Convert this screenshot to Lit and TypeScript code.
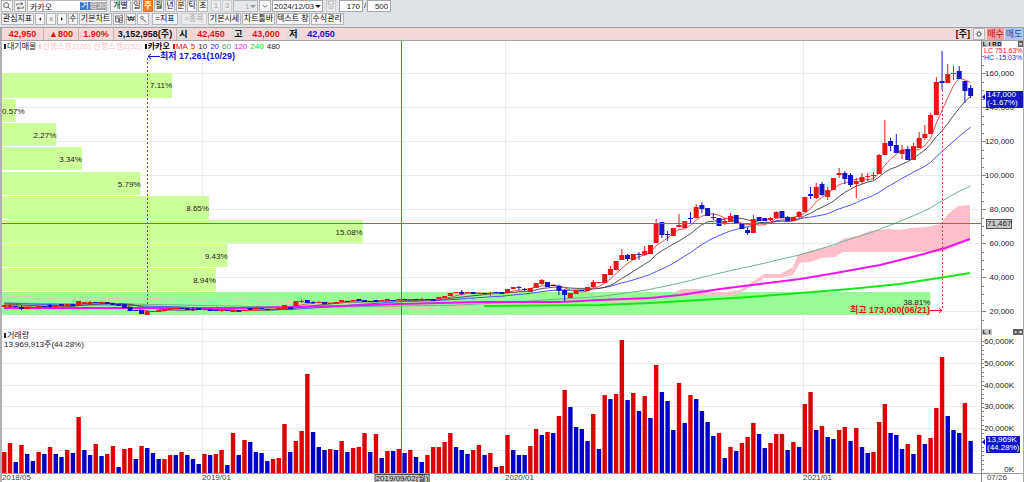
import { LitElement, html, svg, css } from "lit";
import { customElement } from "lit/decorators.js";
import { classMap } from "lit/directives/class-map.js";

const STEP = 5.718;
const FIRST = 4.3;
const X0 = 2;
const W = 979;
const PRICE_TOP = 41;
const PRICE_H = 288;
const VOL_TOP = 329;
const VOL_H = 144;
const cx = (i: number) => FIRST + i * STEP;
const pctX = (x: number) => ((x - X0) / W) * 100;
const pctP = (y: number) => ((y - PRICE_TOP) / PRICE_H) * 100;
const pctV = (y: number) => ((y - VOL_TOP) / VOL_H) * 100;

// Weekly candles: direction, body top, body bottom, optional high and low.
const CANDLES = `
R305,307 R305,307,304,308 B306,307 B307,309,305,310 R307,309 R307,308 R306,308 B306,307 B305,307,304,308 R305,307
B304,306 R304,306 B304,306 R301,306 R302,304 R302,304,301,305 B302,303 R302,304 B302,304 B303,305 B304,306 B304,308
B307,311 B310,311 B310,314 R311,315 R311,312 R310,312 R309,311 R308,310 R308,309 B308,309 B308,310 B309,310,307,311
B308,310 R309,310 B309,311 B310,311 R310,311,309,312 B310,311 R310,312 B310,312 R310,311 B308,310 R308,309 B308,309
B309,310 R309,310 R308,310 R305,309 B307,309 R301,306 R301,302,299,303 B300,303 B302,303,301,304 R302,303 B302,304
R303,304 R302,304 R300,302 B301,302 R300,301 B299,301 B300,302 B301,302 B300,302 R300,301 R299,301 B300,301 R299,300
B299,300 R299,300 B299,300 R299,300,298,301 B299,300 B299,301 R297,299 R296,298 R293,296 R292,293 B292,294,290,295
R292,293 B292,294 R293,294 B293,294 R293,294,292,296 B292,293 B292,294 R289,293 R287,289 B287,288,286,290 B289,290,288,291
R288,292 R283,288 R280,284,279,285 B282,287 B285,286 B286,291,285,295 B290,295,289,301 R293,298 R290,294 B290,291
R287,291 R282,287,280,288 R282,283 R274,283 R269,275,266,275 R261,270 R255,260,249,260 B255,259,254,261 R254,260
B254,255,252,260 R251,255,246,256 R245,254 R224,243,219,243 B222,235,222,238 B234,235,231,241 R228,236 R225,227,214,227
R221,228 B218,219,212,223 R207,218,204,218 B205,209,202,213 B208,216 B217,218,213,220 B218,226 R221,224,218,225
R216,222,213,222 B215,224 B223,229 B230,233,227,235 R219,233,215,233 B217,221 B218,221 R218,220,217,221 R212,218,211,218
B211,218 B217,221,216,221 R217,221 R212,217,211,218 R197,212 B194,196,187,199 R187,198,183,199 B184,195,182,196
R190,197,187,200 R178,190 R173,175,168,178 B173,179,171,184 B175,185,173,187 R181,184,178,198 R177,182,173,184
R176,177,173,181 R175,176,172,180 R155,174,154,174 R143,155,120,155 B141,146,138,151 B145,153,134,153 R150,154,145,159
B149,160,146,160 R146,160,143,160 R138,148,132,148 R134,138,125,140 R115,134,113,134 R82,115,77,115 B81,83,51,90
R74,83,64,83 R73,74,66,80 B71,79,66,79 B81,91,81,103 B88,96,85,98`
  .trim()
  .split(/\s+/)
  .map((s) => {
    const n = s.slice(1).split(",").map(Number);
    return { up: s[0] === "R", top: n[0], bottom: n[1], high: n[2] ?? n[0], low: n[3] ?? n[1] };
  });

const VOLUMES = `
R452 R443 B462 R445 B454 B461 R452 B454 R447 B454 B457 R450 B453 R417 B450 B455 R444 B456 R454 R446
B467 R449 R448 B459 R446 B448 B453 B459 R459 R455 B455 R452 B455 B459 B464 R454 B455 R454 R450 B465
R433 B455 R440 B442 B452 B453 B461 R459 R458 R424 B452 R441 R431 R374 B432 B447 B450 R449 B450 R441
B452 R448 R447 R433 B452 R434 B458 R451 B451 R449 B453 R450 B457 B462 R455 R447 R447 R442 R433 B447
B450 B454 R450 R445 B455 R453 B467 R466 R435 B450 B455 B455 R446 R429 B435 R432 B433 R416 R390 B407
B427 B429 B441 R414 B449 R395 B399 R394 R340 B400 R393 B411 R396 B418 R365 B392 B401 B430 R383 B423
R395 B399 B411 B422 B436 R433 B458 R447 B451 R443 R437 R423 B434 B448 R443 R434 R434 B450 R442 B447
R404 R392 B430 R426 B437 B439 R430 R427 B441 R428 B447 B453 R452 R422 R404 B433 B435 B449 R444 B454
R435 B444 R438 R408 R357 B416 B430 B433 R403 B441`
  .trim()
  .split(/\s+/)
  .map((s) => ({ up: s[0] === "R", top: Number(s.slice(1)) }));

const PROFILE = [
  { pct: 7.11, y: 73 },
  { pct: 0.57, y: 99 },
  { pct: 2.27, y: 123 },
  { pct: 3.34, y: 147 },
  { pct: 5.79, y: 172 },
  { pct: 8.65, y: 196 },
  { pct: 15.08, y: 220 },
  { pct: 9.43, y: 244 },
  { pct: 8.94, y: 268 },
  { pct: 38.81, y: 292 },
];
const PX_PER_PCT = 23.92;

const CLOSES = CANDLES.map((c) => (c.up ? c.top : c.bottom));
function average(period: number, pad: number): string {
  return CLOSES.map((_, i) => {
    let sum = 0;
    for (let k = i - period + 1; k <= i; k++) sum += k < 0 ? pad : CLOSES[k];
    return `${cx(i).toFixed(1)},${(sum / period).toFixed(1)}`;
  }).join(" ");
}

const PRICE_TICKS = [160, 140, 120, 100, 80, 60, 40, 20].map((v, i) => ({ text: `${v},000`, y: 73 + i * 34 }));
const VOL_TICKS = [
  { text: "60,000K", y: 341 },
  { text: "50,000K", y: 363 },
  { text: "40,000K", y: 385 },
  { text: "30,000K", y: 406 },
  { text: "20,000K", y: 428 },
  { text: "", y: 450 },
  { text: "0K", y: 469 },
];
const YEARS = [
  { text: "2019/01", x: 202 },
  { text: "2020/01", x: 505 },
  { text: "2021/01", x: 803 },
];

const icon = {
  search: svg`<circle cx="5" cy="5" r="3" /><path d="M7.2 7.2 10.5 10.5" />`,
  refresh: svg`<path d="M2 5.5V3.5H9M7 1.5 9.5 3.5 7 5M10 6.5V8.5H3M5 6.8 2.5 8.5 5 10.5" />`,
  left: svg`<path class="solid" d="M7.5 3.5V8.5L4.5 6Z" />`,
  bars: svg`<path d="M4 4.5H8.5M4 7.5H8.5" />`,
  right: svg`<path class="solid" d="M4.5 3.5V8.5L7.5 6Z" />`,
  book: svg`<path d="M1.5 2.5H7M1.5 5H5.5M2 2.5V9.5H5.5V5M7.5 1.5H10V10.5H6.5V4.5H10M6.5 7.5H10" />`,
  tool: svg`<path d="M2.5 4.5 4.5 2.5 6.5 4 5 6.5ZM5.8 5.8 10 10" />`,
  gear: svg`<circle cx="6" cy="6" r="2.3" /><path d="M6 2V3.5M6 8.5V10M2 6H3.500M8.5 6H10M3.2 3.2 4.2 4.2M7.8 7.8 8.8 8.8M3.2 8.8 4.2 7.8M7.8 4.2 8.8 3.2" />`,
  down: svg`<path d="M3.5 5 6 7.5 8.5 5" />`,
};
const ico = (k: keyof typeof icon) =>
  html`<svg class="icon" viewBox="0 0 12 12" aria-hidden="true">${icon[k]}</svg>`;

@customElement("app-root")
export class AppRoot extends LitElement {
  static styles = css`
    :host {
      display: grid;
      grid-template-rows: 27px 14px minmax(0, 1fr);
      height: 100vh;
      overflow: hidden;
      background: #fff;
      color: #222;
      font: 8px/9px "Liberation Sans", "Noto Sans CJK KR", sans-serif;
      white-space: nowrap;
    }
    * { box-sizing: border-box; }
    button, input, select { font: inherit; color: inherit; margin: 0; padding: 0; border-radius: 0; }
    .toolbar {
      display: grid;
      grid-template-rows: 12px 12px;
      row-gap: 1px;
      background: #dfe3e8;
    }
    .bar { display: flex; gap: 1px; padding-left: 1px; align-items: stretch; }
    .tool {
      min-width: 10px;
      border: 1px solid #b4b6ba;
      background: #f4f4f4;
      color: #111;
      display: flex;
      align-items: center;
      justify-content: center;
      line-height: 10px;
    }
    .tool.on { background: #f58220; border-color: #e07010; color: #fff; font-weight: bold; }
    .tool:disabled { color: #a8a8a8; background: #ebebeb; border-color: #cfcfcf; }
    .wide { min-width: 33px; }
    .mid { min-width: 26px; }
    .pair { min-width: 21px; }
    .gap { margin-left: 2px; }
    .icon { width: 10px; height: 10px; fill: none; stroke: #555; stroke-width: 1; flex: none; }
    .mini .icon { width: 8px; }
    .icon .solid { fill: #222; stroke: none; }
    .search { display: flex; width: 80px; border: 1px solid #b4b6ba; background: #fff; align-items: center; margin-right: 2px; }
    .search input { flex: 1; min-width: 0; height: 10px; border: 0; padding-left: 2px; background: transparent; outline: 0; }
    .badge { background: #3c78c8; color: #fff; width: 10px; height: 8px; line-height: 8px; text-align: center; }
    .badge.grey { background: #a0a0a0; color: #eee; width: 16px; }
    .box { border: 1px solid #a4a6aa; background: #fff; height: 12px; text-align: right; padding-right: 2px; width: 24px; }
    .date { width: 51px; }
    .pick { position: relative; display: flex; }
    .pick select { appearance: none; width: 100%; height: 12px; border: 1px solid #a4a6aa; background: #fff; padding-left: 1px; }
    .pick::after {
      content: "";
      position: absolute;
      right: 2px;
      top: 5px;
      border: 3px solid transparent;
      border-top-color: #222;
      border-bottom: 0;
    }
    .pick.dim { width: 25px; }
    .pick.dim select { background: #ebebeb; color: #999; padding-left: 11px; }
    .pick.dim::after { border-top-color: #999; }
    .slash { line-height: 12px; }
    .info {
      display: flex;
      align-items: stretch;
      border: 1px solid #a8a0a0;
      border-left: 2px solid #a8a8a8;
      background: #f3d8d8;
      font-weight: bold;
      font-size: 9px;
      line-height: 12px;
      color: #111;
    }
    .cell { width: 42px; text-align: center; border-right: 1px solid #c8b4b4; }
    .cell.short { width: 35px; }
    .cell.long { width: 63px; }
    .cell.tag { width: 13px; background: #dcdcdc; border: 0; }
    .cell.last { border: 0; }
    .up { color: #e01414; }
    .down { color: #1414c8; }
    .info-end { margin-left: auto; display: flex; gap: 1px; }
    .week { padding-right: 2px; }
    .info .tool { font: 9px/10px "Noto Sans CJK KR", sans-serif; }
    .info .buy { background: #f0a0a0; color: #c01010; width: 17px; border: 0; margin-left: 1px; }
    .info .sell { background: #a8c8f0; color: #1848a0; width: 18px; border: 0; }
    .chart {
      display: grid;
      grid-template-columns: minmax(0, 1fr) 43px;
      grid-template-rows: minmax(0, 2fr) minmax(0, 1fr) 9px;
      border-left: 2px solid #b0b0b0;
    }
    .plot, .axis { position: relative; min-height: 0; }
    .plot svg { position: absolute; inset: 0; width: 100%; height: 100%; display: block; }
    .axis { border-left: 1px solid #888; border-right: 1px solid #aaa; }
    .dates { position: relative; border-top: 1px solid #999; line-height: 8px; color: #444; }
    .at { position: absolute; }
    .legend { position: relative; display: flex; gap: 3px; padding: 1px 0 0 2px; }
    .key { display: flex; align-items: center; gap: 1px; }
    .key::before { content: ""; width: 2px; height: 5px; background: currentColor; }
    .pale { color: #f8c4c8; }
    .strong { font-weight: bold; color: #000; }
    .red { color: #e01414; }
    .c20 { color: #2828e0; }
    .c60 { color: #50a078; }
    .c120 { color: #f020f0; }
    .c240 { color: #14d814; }
    .volume-head { position: relative; padding: 2px 0 0 2px; }
    .share { transform: translateY(-50%); }
    .note { font-weight: bold; font-size: 9px; transform: translateY(-50%); }
    .grid { stroke: #ececec; }
    .cross { stroke: #f04040; }
    .tick { right: 9px; transform: translateY(-50%); }
    .mark { left: 0; width: 4px; height: 1px; background: #888; }
    .mark.minor { width: 2px; }
    .now { left: 4px; right: 0; height: 17px; padding-left: 1px; line-height: 8px; background: #1414c8; color: #fff; }
    .now::before {
      content: "";
      position: absolute;
      left: -4px;
      top: 3px;
      border: 3px solid transparent;
      border-left: 0;
      border-right-color: #1414c8;
    }
    .now.vol { right: 3px; }
    .cursor { background: #c8c8c8; border: 1px solid #555; line-height: 8px; color: #222; }
    .cursor.y { left: 4px; transform: translateY(-50%); }
    .cursor.x { top: 0; transform: translateX(-50%); line-height: 7px; }
    .modes { display: flex; position: relative; font: bold 6px/6px "Liberation Sans", sans-serif; height: 6px; }
    .modes button { width: 5px; height: 6px; border: 0; background: #c8c8c8; font: inherit; color: #000; }
    .modes button.close { margin-left: auto; background: #606060; color: #fff; }
    .modes button.close + button.close { margin-left: 0; }
    .gain { position: relative; padding-left: 2px; font-size: 7px; line-height: 7px; }
  `;

  private candles() {
    return CANDLES.map((c, i) => {
      const color = c.up ? "#ec1414" : "#1414c8";
      return svg`<path d="M${cx(i)} ${c.high}V${c.low}" stroke=${color} />
        <rect x=${cx(i) - 2.5} y=${c.top} width="5" height=${Math.max(1, c.bottom - c.top)} fill=${color} />`;
    });
  }

  private pricePlot() {
    return html`<svg viewBox="2 41 979 288" preserveAspectRatio="none" fill="none" aria-hidden="true">
      ${PRICE_TICKS.map((t) => svg`<path class="grid" d="M2 ${t.y + 0.5}H981" />`)}
      ${YEARS.map((t) => svg`<path class="grid" d="M${t.x + 0.5} 41V329" />`)}
      ${PROFILE.map(
        (p, i) => svg`<rect x="2" y=${p.y} width=${p.pct * PX_PER_PCT} height=${i ? 23 : 25}
          fill=${i === PROFILE.length - 1 ? "#98fb98" : "#ccff99"} />`
      )}
      <path fill="#ffc0cb" d="M675 292 682 289 702 289 712 292 725 292 740 290 755 280 764 274 780 274 793 267
        798 255 810 251 833 246 843 239 860 235 870 231 887 229 900 230 910 228 927 227 940 224 948 214 958 206
        970 205V241L967 241 953 247 943 252H843L835 257 822 258 810 262 800 263 793 275 780 278 764 278 750 287
        740 293 725 296 700 296Z" />
      <polyline stroke="#e8c8b8" points="4,297 20,296 60,299 95,299 140,298 200,300 240,299 268,300 300,304 340,306
        400,309 440,308 480,305 540,305 600,304 640,300 675,295" />
      <polyline stroke="#70b090" points=${average(60, 303)} />
      <polyline stroke="#5050f0" points=${average(20, 303)} />
      <polyline stroke="#505050" points=${average(10, 304)} />
      <polyline stroke="#f05050" points=${average(5, 305)} />
      <polyline stroke="#f014f0" stroke-width="2" points="4,308 240,308 340,306 400,304 480,302 560,302 600,300
        650,298 680,295 720,289 760,284 800,279 830,274 880,265 920,255 945,248 970,239" />
      <polyline stroke="#14e814" stroke-width="2" points="484,306 600,305 650,303 700,300 750,297 800,293 850,289
        900,284 945,277 970,273" />
      ${this.candles()}
      <path stroke="#5050d0" stroke-dasharray="2 2" d="M147.5 58V312" />
      <path stroke="#1414c8" d="M160 56.5H148M151 54 148 56.5 151 59" />
      <path stroke="#e84848" stroke-dasharray="2 2" d="M942.5 90V310" />
      <path stroke="#e01414" d="M930 310.5H942M939 308 942 310.5 939 313" />
      <path class="cross" d="M2 223.5H981M401.5 41V329" />
    </svg>`;
  }

  private volumePlot() {
    return html`<svg viewBox="2 329 979 144" preserveAspectRatio="none" fill="none" aria-hidden="true">
      <path class="grid" d="M2 329.5H981" />
      ${VOL_TICKS.slice(0, 6).map((t) => svg`<path class="grid" d="M2 ${t.y + 0.5}H981" />`)}
      ${YEARS.map((t) => svg`<path class="grid" d="M${t.x + 0.5} 329V473" />`)}
      ${VOLUMES.map(
        (v, i) => svg`<rect x=${cx(i) - 2.2} y=${v.top} width="4.4" height=${473 - v.top}
          fill=${v.up ? "#dc0000" : "#0000c8"} />`
      )}
      <path class="cross" d="M401.5 329V473" />
    </svg>`;
  }

  private shareLabel(p: { pct: number; y: number }, i: number) {
    const right = 100 - pctX(X0 + p.pct * PX_PER_PCT);
    const side = right > 97.5 ? "left:0" : `right:${right}%`;
    return html`<span class="at share" style="${side};top:${pctP(p.y + (i === 9 ? 10 : 12))}%"
      >${p.pct.toFixed(2)}%</span>`;
  }

  render() {
    const periods = ["일", "주", "월", "년", "분", "틱", "초"];
    return html`
      <header class="toolbar">
        <div class="bar">
          <button class="tool" aria-label="종목 검색">${ico("search")}</button>
          <button class="tool" aria-label="새로고침">${ico("refresh")}</button>
          <div class="search">
            <input aria-label="종목" value="카카오" />
            <span class="badge">거</span><span class="badge grey">증30</span>
          </div>
          <button class="tool pair">개별</button>
          ${periods.map((p) => html`<button class=${classMap({ tool: true, on: p === "주" })}>${p}</button>`)}
          <button class="tool gap" disabled>1</button>
          <button class="tool" disabled>3</button>
          <div class="pick dim"><select aria-label="간격" disabled><option>1</option></select></div>
          <button class="tool" aria-label="펼치기">${ico("down")}</button>
          <div class="pick date"><select aria-label="날짜"><option>2024/12/03</option></select></div>
          <button class="tool gap" disabled>당</button>
          <input class="box gap" aria-label="표시 개수" value="170" />
          <span class="slash">/</span>
          <input class="box" aria-label="전체 개수" value="500" />
        </div>
        <div class="bar">
          <button class="tool wide">관심지표</button>
          <button class="tool mini" aria-label="이전">${ico("left")}</button>
          <button class="tool mini" aria-label="목록">${ico("bars")}</button>
          <button class="tool mini" aria-label="다음">${ico("right")}</button>
          <button class="tool">수</button>
          <button class="tool wide">기본차트</button>
          <button class="tool" aria-label="보기">${ico("book")}</button>
          <button class="tool">₩</button>
          <button class="tool" aria-label="설정">${ico("tool")}</button>
          <button class="tool mid gap">=지표</button>
          <button class="tool mid gap" disabled>=종목</button>
          <button class="tool wide">기본시세</button>
          <button class="tool wide">차트툴바</button>
          <button class="tool wide">텍스트 창</button>
          <button class="tool wide">수식관리</button>
        </div>
      </header>
      <section class="info">
        <span class="cell up">42,950</span>
        <span class="cell short up">▲800</span>
        <span class="cell short up">1.90%</span>
        <span class="cell long">3,152,958(주)</span>
        <span class="cell tag">시</span>
        <span class="cell last up">42,450</span>
        <span class="cell tag">고</span>
        <span class="cell last up">43,000</span>
        <span class="cell tag">저</span>
        <span class="cell last down">42,050</span>
        <div class="info-end">
          <span class="week">[주]</span>
          <button class="tool" aria-label="환경설정">${ico("gear")}</button>
          <button class="tool buy">매수</button>
          <button class="tool sell">매도</button>
        </div>
      </section>
      <main class="chart">
        <div class="plot">
          ${this.pricePlot()}
          <div class="legend">
            <span class="key">대기매물</span>
            <span class="key pale">선행스팬1(26)</span>
            <span class="pale">선행스팬2(52)</span>
            <span class="key strong">카카오</span>
            <span class="key red">MA</span>
            <span class="red">5</span>
            <span>10</span>
            <span class="c20">20</span>
            <span class="c60">60</span>
            <span class="c120">120</span>
            <span class="c240">240</span>
            <span>480</span>
          </div>
          ${PROFILE.map((p, i) => this.shareLabel(p, i))}
          <span class="at note down" style="left:${pctX(160)}%;top:${pctP(56)}%">최저 17,261(10/29)</span>
          <span class="at note red" style="right:${100 - pctX(930)}%;top:${pctP(310)}%">최고 173,000(06/21)</span>
        </div>
        <div class="axis">
          ${Array.from({ length: 32 }, (_, i) => 56 + i * 8.5).map(
            (y) => html`<i class="at mark minor" style="top:${pctP(y)}%"></i>`
          )}
          ${PRICE_TICKS.map(
            (t) => html`<i class="at mark" style="top:${pctP(t.y)}%"></i>
              <span class="at tick" style="top:${pctP(t.y)}%">${t.text}</span>`
          )}
          <div class="modes">
            <button>L</button><button>I</button><button>R</button><button>D</button><button class="close">×</button>
          </div>
          <div class="gain red">LC 751.63%</div>
          <div class="gain c20">HC -15.03%</div>
          <div class="at now" style="top:${pctP(91)}%">147,000<br />(-1.67%)</div>
          <span class="at cursor y" style="top:${pctP(224)}%">71,467</span>
        </div>
        <div class="plot">
          ${this.volumePlot()}
          <div class="volume-head">
            <div class="key">거래량</div>
            <div>13,969,913주(44.28%)</div>
          </div>
        </div>
        <div class="axis">
          ${Array.from({ length: 30 }, (_, i) => 341 + i * 4.4).map(
            (y) => html`<i class="at mark minor" style="top:${pctV(y)}%"></i>`
          )}
          ${VOL_TICKS.map((t) => html`<span class="at tick" style="top:${pctV(t.y)}%">${t.text}</span>`)}
          <div class="modes">
            <button>L</button><button>I</button><button class="close">▪</button><button class="close">×</button>
          </div>
          <div class="at now vol" style="top:${pctV(436)}%">13,969K<br />(44.28%)</div>
        </div>
        <div class="dates">
          <span class="at">2018/05</span>
          ${YEARS.map((t) => html`<span class="at" style="left:${pctX(t.x)}%">${t.text}</span>`)}
          <span class="at cursor x" style="left:${pctX(402)}%">2019/09/02(월)</span>
        </div>
        <div class="dates axis"><span class="at" style="left:12%">07/26</span></div>
      </main>
    `;
  }
}
